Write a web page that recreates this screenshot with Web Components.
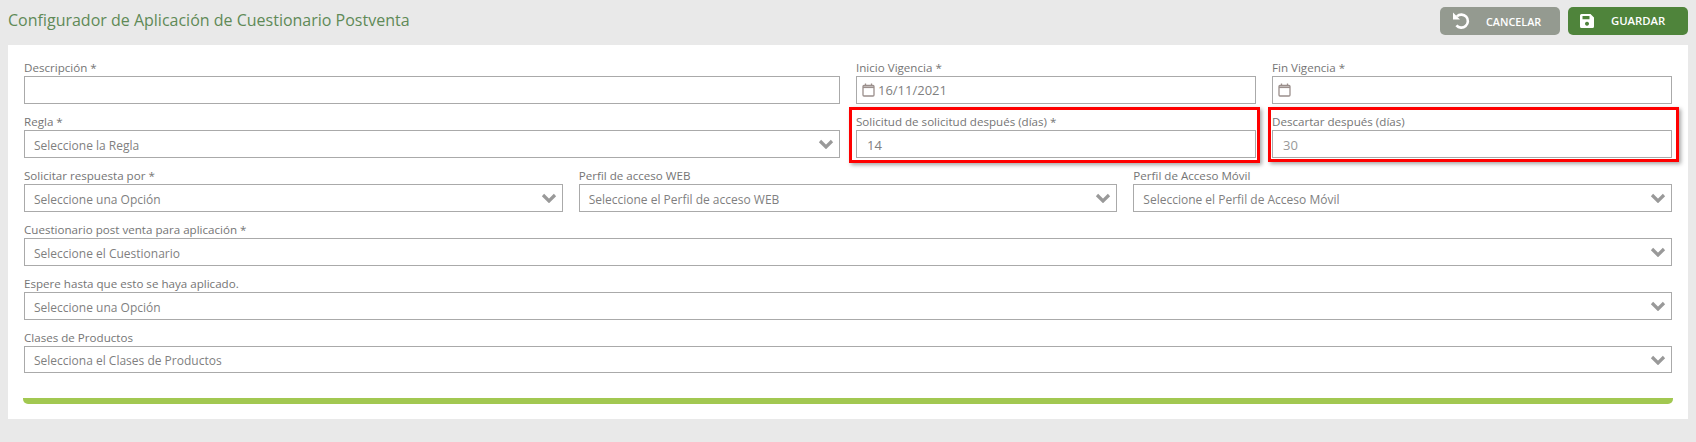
<!DOCTYPE html>
<html lang="es">
<head>
<meta charset="utf-8">
<title>Configurador</title>
<style>
  html, body { margin: 0; background: #e9e9e9; }
  body { font-family: "Open Sans", "Noto Sans", sans-serif; }
</style>
</head>
<body>
<config-page>
  <page-header slot="header" heading="Configurador de Aplicación de Cuestionario Postventa">
    <action-btn kind="cancel">CANCELAR</action-btn>
    <action-btn kind="save">GUARDAR</action-btn>
  </page-header>
  <form-field span="6" label="Descripción *"></form-field>
  <form-field span="3" type="date" label="Inicio Vigencia *">16/11/2021</form-field>
  <form-field span="3" type="date" label="Fin Vigencia *"></form-field>
  <form-field span="6" type="select" label="Regla *">Seleccione la Regla</form-field>
  <form-field span="3" label="Solicitud de solicitud después (días) *" marked="first">14</form-field>
  <form-field span="3" label="Descartar después (días)" marked="second" muted>30</form-field>
  <form-field span="4" type="select" label="Solicitar respuesta por *">Seleccione una Opción</form-field>
  <form-field span="4" type="select" label="Perfil de acceso WEB">Seleccione el Perfil de acceso WEB</form-field>
  <form-field span="4" type="select" label="Perfil de Acceso Móvil">Seleccione el Perfil de Acceso Móvil</form-field>
  <form-field span="12" type="select" label="Cuestionario post venta para aplicación *">Seleccione el Cuestionario</form-field>
  <form-field span="12" type="select" label="Espere hasta que esto se haya aplicado.">Seleccione una Opción</form-field>
  <form-field span="12" type="select" short label="Clases de Productos">Selecciona el Clases de Productos</form-field>
</config-page>
<script>
const ICONS = {
  cancel: `<svg width="18" height="18" viewBox="0 0 18 18" fill="none"><path d="M4.9 4.400A6.500 6.500 0 1 1 4.400 13.300" stroke="#fff" stroke-width="2.600"/><path d="M1 .500V7.500H8z" fill="#fff"/></svg>`,
  save: `<svg width="14" height="14" viewBox="0 0 14 14"><path fill="#fff" fill-rule="evenodd" d="M1.500 0H10.500L14 3.500V12.500A1.500 1.500 0 0 1 12.500 14H1.500A1.500 1.500 0 0 1 0 12.500V1.500A1.500 1.500 0 0 1 1.500 0zM2.500 2V5.200H9.500V2zM7 7.800a2 2 0 1 0 .01 0z"/></svg>`,
  calendar: `<svg width="13" height="14" viewBox="0 0 13 14" fill="none"><rect x="1" y="2.500" width="11" height="10.500" rx="1" stroke="#9b8f8c" stroke-width="1.300"/><path d="M1 4.300h11" stroke="#9b8f8c" stroke-width="1.600"/><path d="M3.500.500v2M9.500.500v2" stroke="#9b8f8c" stroke-width="1.300"/></svg>`,
  chevron: `<svg width="16" height="10" viewBox="0 0 16 10" fill="none"><path d="M2 2l6 6 6-6" stroke="#999" stroke-width="3.200"/></svg>`
};

class ConfigPage extends HTMLElement {
  constructor() {
    super();
    this.attachShadow({ mode: "open" });
  }
  connectedCallback() {
    this.shadowRoot.innerHTML = `
    <style>
      :host { display: block; height: 442px; background: #e9e9e9; overflow: hidden; }
      .panel {
        margin: 0 8px; background: #fff; height: 374px; box-sizing: border-box;
        padding: 5px 16px 0;
      }
      .grid { display: grid; grid-template-columns: repeat(12, 1fr); column-gap: 16px; }
      .bar {
        height: 6px; margin: 24px -1px 0; background: #a2c851;
        border-radius: 0 0 5px 5px;
      }
    </style>
    <slot name="header"></slot>
    <div class="panel">
      <div class="grid"><slot></slot></div>
      <div class="bar"></div>
    </div>`;
  }
}

class PageHeader extends HTMLElement {
  constructor() {
    super();
    this.attachShadow({ mode: "open" });
  }
  connectedCallback() {
    this.shadowRoot.innerHTML = `
    <style>
      :host { display: flex; height: 45px; box-sizing: border-box; padding: 7px 8px 0; justify-content: space-between; }
      h1 { margin: 0; font-size: 16px; line-height: 26px; font-weight: 400; color: #5f8a57; }
      .actions { display: flex; gap: 8px; }
    </style>
    <h1>${this.getAttribute("heading")}</h1>
    <div class="actions"><slot></slot></div>`;
  }
}

class ActionBtn extends HTMLElement {
  constructor() {
    super();
    this.attachShadow({ mode: "open" });
  }
  connectedCallback() {
    const save = this.getAttribute("kind") === "save";
    this.shadowRoot.innerHTML = `
    <style>
      :host {
        display: flex; width: 120px; height: 28px; align-items: center; box-sizing: border-box;
        border-radius: 5px; color: #fff; font-weight: 600;
        font-size: ${save ? 11.3 : 10.8}px;
        background: ${save ? "#4f843b" : "#949a90"};
        padding-left: 12px;
      }
      svg { display: block; }
      .txt { margin-left: ${save ? 17 : 16}px; margin-top: ${save ? -2 : 0}px; }
    </style>
    ${ICONS[this.getAttribute("kind")]}<span class="txt"><slot></slot></span>`;
  }
}

class FormField extends HTMLElement {
  constructor() {
    super();
    this.attachShadow({ mode: "open" });
  }
  connectedCallback() {
    const type = this.getAttribute("type");
    const span = this.getAttribute("span") || 12;
    const short = this.hasAttribute("short");
    const marked = this.getAttribute("marked");
    const pad = type === "date" ? 5 : marked ? 10 : 9;
    this.shadowRoot.innerHTML = `
    <style>
      :host { display: block; position: relative; grid-column: span ${span}; height: 54px; }
      label {
        display: block; height: 26px; box-sizing: border-box; padding-top: 9px; line-height: 18px;
        font-size: 11.6px; color: #757575; white-space: nowrap;
      }
      .box {
        display: flex; align-items: center; height: ${short ? 27 : 28}px; box-sizing: border-box;
        border: 1px solid #aaa; padding: ${type === "date" ? 0 : 2}px ${type === "select" ? 5 : pad}px 0 ${pad}px;
        font-size: ${type === "date" || marked ? 13 : 12}px;
        color: ${this.hasAttribute("muted") ? "#999" : "#7f7f7f"}; background: #fff;
      }
      .box svg { margin-top: ${type === "select" ? -2 : 0}px; }
      .val { flex: 1; white-space: nowrap; margin-left: ${type === "date" ? 3 : 0}px; }
      .mark {
        position: absolute; top: 3px; bottom: ${marked === "second" ? -4 : -5}px;
        left: ${marked === "second" ? -4 : -7}px; right: ${marked === "second" ? -7 : -4}px;
        border: 3px solid #f00; box-shadow: 2px 2px 4px rgba(0,0,0,.35); pointer-events: none;
      }
    </style>
    <label>${this.getAttribute("label")}</label>
    <div class="box">
      ${type === "date" ? ICONS.calendar : ""}
      <span class="val"><slot></slot></span>
      ${type === "select" ? ICONS.chevron : ""}
    </div>
    ${marked ? '<div class="mark"></div>' : ""}`;
  }
}

customElements.define("config-page", ConfigPage);
customElements.define("page-header", PageHeader);
customElements.define("action-btn", ActionBtn);
customElements.define("form-field", FormField);
</script>
</body>
</html>
